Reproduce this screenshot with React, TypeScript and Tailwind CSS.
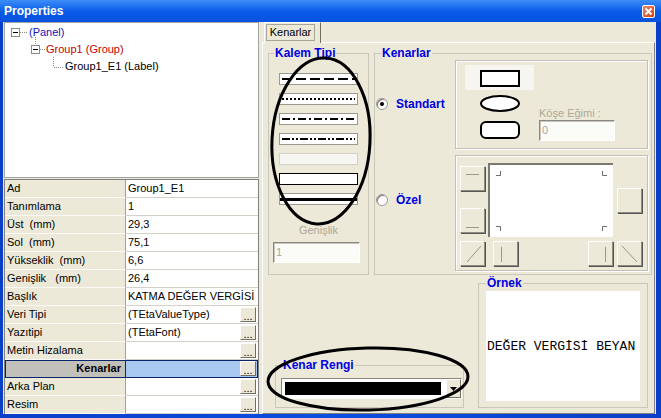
import React from "react";

const props: { label: string; value: string; btn?: boolean; sel?: boolean }[] = [
  { label: "Ad", value: "Group1_E1" },
  { label: "Tanımlama", value: "1" },
  { label: "Üst  (mm)", value: "29,3" },
  { label: "Sol  (mm)", value: "75,1" },
  { label: "Yükseklik  (mm)", value: "6,6" },
  { label: "Genişlik   (mm)", value: "26,4" },
  { label: "Başlık", value: "KATMA DEĞER VERGİSİ" },
  { label: "Veri Tipi", value: "(TEtaValueType)", btn: true },
  { label: "Yazıtipi", value: "(TEtaFont)", btn: true },
  { label: "Metin Hizalama", value: "", btn: true },
  { label: "Kenarlar", value: "", btn: true, sel: true },
  { label: "Arka Plan", value: "", btn: true },
  { label: "Resim", value: "", btn: true },
];

const Dots = () => (
  <div className="w-[16px] h-[15px] mr-[2px] shrink-0 bg-[#ece9d8] border border-t-white border-l-white border-r-[#716f64] border-b-[#716f64] flex items-end justify-center text-[11px] leading-[9px]">
    ...
  </div>
);

const PropertyGrid = () => (
  <div className="mt-[1px] w-[255px] border-t border-l border-r border-[#808080] bg-white">
    {props.map((p) => (
      <div
        key={p.label}
        className={`flex h-[18px] ${p.sel ? "outline outline-1 -outline-offset-1 outline-[#0a246a]" : ""}`}
      >
        <div
          className={`w-[121px] shrink-0 border-r border-b whitespace-pre leading-[17px] ${
            p.sel
              ? "bg-[#c2c0bb] border-r-[#0a246a] border-b-[#0a246a] font-bold text-right pr-[4px]"
              : "bg-[#ece9d8] border-r-[#a0a0a0] border-b-[#fbfaf6] pl-[2px]"
          }`}
        >
          {p.label}
        </div>
        <div
          className={`w-[132px] flex items-center border-b ${
            p.sel ? "bg-[#a8c8f2] border-b-[#0a246a]" : "bg-white border-b-[#d4d1c8]"
          }`}
        >
          <span className="flex-1 pl-[2px] whitespace-nowrap overflow-hidden leading-[17px]">{p.value}</span>
          {p.btn && <Dots />}
        </div>
      </div>
    ))}
  </div>
);

const Tree = () => (
  <div className="h-[156px] w-[255px] border border-[#a3a3a3] bg-white pt-[1px]">
    <div className="flex items-center h-[17px] pl-[6px]">
      <svg width="17" height="16" className="overflow-visible">
        <rect x="0.5" y="3.5" width="8" height="8" fill="white" stroke="#8c8c8c" />
        <line x1="2" y1="7.5" x2="7" y2="7.5" stroke="#000" />
        <line x1="9" y1="7.5" x2="17" y2="7.5" stroke="#8c8c8c" strokeDasharray="1 1" />
      </svg>
      <span className="ml-[1px] text-[#1414b4]">(Panel)</span>
    </div>
    <div className="flex items-center h-[17px] pl-[26px]">
      <svg width="14" height="16" className="overflow-visible">
        <line x1="4.5" y1="-5" x2="4.5" y2="3" stroke="#8c8c8c" strokeDasharray="1 1" />
        <rect x="0.5" y="3.5" width="8" height="8" fill="white" stroke="#8c8c8c" />
        <line x1="2" y1="7.5" x2="7" y2="7.5" stroke="#000" />
        <line x1="9" y1="7.5" x2="14" y2="7.5" stroke="#8c8c8c" strokeDasharray="1 1" />
      </svg>
      <span className="ml-[1px] text-[#c80000]">Group1 (Group)</span>
    </div>
    <div className="flex items-center h-[17px] pl-[44px]">
      <svg width="14" height="16" className="overflow-visible">
        <line x1="4.5" y1="-2" x2="4.5" y2="8" stroke="#8c8c8c" strokeDasharray="1 1" />
        <line x1="5" y1="8.5" x2="14" y2="8.5" stroke="#8c8c8c" strokeDasharray="1 1" />
      </svg>
      <span className="ml-[2px]">Group1_E1 (Label)</span>
    </div>
  </div>
);

const Legend = ({ children, ml }: { children: React.ReactNode; ml: string }) => (
  <legend className={`${ml} px-[1px] text-[12px] leading-[14px] font-bold text-[#0000e0]`}>{children}</legend>
);

const LineBox = ({ dash, faint }: { dash?: string; faint?: boolean }) => (
  <div
    className={`w-[79px] h-[12px] border ${
      faint ? "border-[#d2d0c8] bg-[#f6f6f3]" : "border-[#9c9a90] bg-white"
    }`}
  >
    {dash && (
      <svg width="77" height="10">
        <line x1="2" y1="5" x2="75" y2="5" stroke="#000" strokeWidth="2" strokeDasharray={dash} />
      </svg>
    )}
  </div>
);

const Btn3D = ({ children, className = "" }: { children?: React.ReactNode; className?: string }) => (
  <div
    className={`w-[25px] h-[25px] shrink-0 bg-[#ece9d8] border border-t-white border-l-white border-r-[#8d8a7e] border-b-[#8d8a7e] shadow-[1px_1px_0_#555] ${className}`}
  >
    <svg width="23" height="23">{children}</svg>
  </div>
);

const KalemTipi = () => (
  <fieldset className="w-[101px] h-[229px] border border-[#c9c7ba]">
    <Legend ml="ml-[5px]">
      Kalem <span className="underline">T</span>ipi
    </Legend>
    <div className="flex flex-col items-start pl-[10px] pt-[13px] gap-[8px]">
      <LineBox dash="10 4" />
      <LineBox dash="2 2" />
      <LineBox dash="8 3 2 3" />
      <LineBox dash="8 2 2 2 2 2" />
      <LineBox faint />
      <div className="w-[79px] h-[12px] border border-black bg-white" />
      <div className="w-[79px] h-[12px] border border-[#9c9a90] bg-white flex flex-col justify-center">
        <div className="h-[3px] bg-black" />
      </div>
    </div>
    <div className="mt-[18px] text-center text-[#aca899] leading-[14px]">Genişlik</div>
    <div className="mt-[5px] ml-[4px] w-[87px] h-[21px] bg-[#fbfbf8] border border-t-[#8a887e] border-l-[#8a887e] border-r-white border-b-white shadow-[inset_1px_1px_0_#c8c6bc] pl-[2px] leading-[19px] text-[#aca899]">
      1
    </div>
  </fieldset>
);

const Radio = ({ on }: { on?: boolean }) => (
  <span className="w-[12px] h-[12px] rounded-full bg-white border border-[#9c9a90] shadow-[inset_1px_1px_0_#808080] flex items-center justify-center">
    {on && <span className="w-[4px] h-[4px] rounded-full bg-black" />}
  </span>
);

const Frame = ({ children, className = "" }: { children: React.ReactNode; className?: string }) => (
  <div className={`w-[193px] border border-[#c2c0b3] shadow-[inset_1px_1px_0_#fff,1px_1px_0_#fff] ${className}`}>
    {children}
  </div>
);

const Kenarlar = () => (
  <fieldset className="ml-[5px] w-[278px] h-[229px] border border-[#c9c7ba]">
    <Legend ml="ml-[6px]">Kenarlar</Legend>
    <div className="flex">
      <div className="w-[80px] shrink-0 pl-[1px]">
        <div className="mt-[37px] flex items-center gap-[8px] h-[14px]">
          <Radio on />
          <span className="text-[12px] font-bold text-[#0000e0]">Standart</span>
        </div>
        <div className="mt-[82px] flex items-center gap-[8px] h-[14px]">
          <Radio />
          <span className="text-[12px] font-bold text-[#0000e0]">Özel</span>
        </div>
      </div>
      <div className="flex flex-col gap-[6px]">
        <Frame className="h-[89px] flex">
          <div className="ml-[9px] pt-[4px] w-[69px] flex flex-col items-center">
            <div className="w-[69px] h-[25px] bg-[#f6f5f0] flex items-center justify-center">
              <svg width="40" height="18">
                <rect x="1" y="2" width="38" height="15" fill="white" stroke="#000" strokeWidth="2" />
              </svg>
            </div>
            <svg width="40" height="17" className="mt-[5px]">
              <ellipse cx="20" cy="8.5" rx="19" ry="7.5" fill="white" stroke="#000" strokeWidth="2" />
            </svg>
            <svg width="40" height="18" className="mt-[9px]">
              <rect x="1" y="1" width="38" height="16" rx="5" fill="white" stroke="#000" strokeWidth="2" />
            </svg>
          </div>
          <div className="ml-[5px] pt-[45px] flex flex-col">
            <span className="leading-[14px] text-[#aca899] whitespace-pre">Köşe Eğimi :</span>
            <div className="w-[76px] h-[21px] bg-[#fbfbf8] border border-t-[#8a887e] border-l-[#8a887e] border-r-white border-b-white shadow-[inset_1px_1px_0_#c8c6bc] pl-[2px] leading-[19px] text-[#aca899]">
              0
            </div>
          </div>
        </Frame>
        <Frame className="h-[116px] pt-[7px]">
          <div className="flex">
            <div className="ml-[4px] flex flex-col">
              <Btn3D className="mt-[3px]">
                <line x1="5" y1="7.5" x2="18" y2="7.5" stroke="#9a978b" />
              </Btn3D>
              <Btn3D className="mt-[17px]">
                <line x1="5" y1="18.5" x2="18" y2="18.5" stroke="#9a978b" />
              </Btn3D>
            </div>
            <div className="ml-[3px] w-[125px] h-[74px] bg-white border-t-2 border-l-2 border-[#7c7a70]">
              <svg width="123" height="72">
                <path d="M6 10.5H10.5V6" fill="none" stroke="#6e6c64" />
                <path d="M117 10.5H112.5V6" fill="none" stroke="#6e6c64" />
                <path d="M6 61.5H10.5V66" fill="none" stroke="#6e6c64" />
                <path d="M117 61.5H112.5V66" fill="none" stroke="#6e6c64" />
              </svg>
            </div>
            <div className="ml-[4px]">
              <Btn3D className="mt-[25px]" />
            </div>
          </div>
          <div className="mt-[4px] flex">
            <Btn3D className="ml-[4px]">
              <line x1="6" y1="20" x2="20" y2="4" stroke="#9a978b" />
            </Btn3D>
            <Btn3D className="ml-[8px]">
              <line x1="7.5" y1="5" x2="7.5" y2="20" stroke="#9a978b" />
            </Btn3D>
            <Btn3D className="ml-[70px]">
              <line x1="16.5" y1="5" x2="16.5" y2="20" stroke="#9a978b" />
            </Btn3D>
            <Btn3D className="ml-[4px]">
              <line x1="4" y1="4" x2="19" y2="20" stroke="#9a978b" />
            </Btn3D>
          </div>
        </Frame>
      </div>
    </div>
  </fieldset>
);

const KenarRengi = () => (
  <fieldset className="w-[189px] h-[50px] border border-[#c9c7ba]">
    <Legend ml="ml-[6px]">Kenar Rengi</Legend>
    <div className="mt-[6px] ml-[5px] w-[181px] h-[21px] flex bg-white border border-t-[#8a887e] border-l-[#8a887e] border-r-white border-b-white">
      <div className="flex-1 m-[3px] mr-[5px] bg-black" />
      <div className="w-[15px] bg-[#ece9d8] border border-t-white border-l-white border-r-[#716f64] border-b-[#716f64] flex items-center justify-center">
        <svg width="7" height="4">
          <path d="M0 0H7L3.5 4Z" fill="#000" />
        </svg>
      </div>
    </div>
  </fieldset>
);

const Ornek = () => (
  <fieldset className="ml-[14px] w-[170px] h-[132px] border border-[#c9c7ba]">
    <Legend ml="ml-[7px]">Örnek</Legend>
    <div className="mt-[1px] ml-[7px] w-[154px] h-[110px] bg-white flex items-center pl-[1px] pt-[1px]">
      <span className="font-['Liberation_Mono',monospace] text-[13px] whitespace-nowrap">DEĞER VERGİSİ BEYAN</span>
    </div>
  </fieldset>
);

export default function App() {
  return (
    <div className="relative w-[661px] h-[418px] flex flex-col bg-gradient-to-r from-[#0a3fc8] via-[#0b4ee0] to-[#0a3fc8] font-['Liberation_Sans',Arial,sans-serif] text-[11px] text-black overflow-hidden">
      <div className="h-[22px] shrink-0 flex items-center justify-between bg-gradient-to-b from-[#3d8ef8] via-[#0a5ce9] to-[#0652de] pl-[4px] pr-[6px]">
        <span className="text-white font-bold text-[12px] leading-none">Properties</span>
        <div className="w-[13px] h-[13px] rounded-[2px] border border-white bg-gradient-to-br from-[#f08a64] to-[#cf3a12] flex items-center justify-center">
          <svg width="9" height="9">
            <path d="M1.5 1.5L7.5 7.5M7.5 1.5L1.5 7.5" stroke="white" strokeWidth="2" />
          </svg>
        </div>
      </div>
      <div className="flex-1 flex ml-[3px] mr-[5px] mb-[4px] bg-[#ece9d8]">
        <div className="w-[256px] shrink-0 pl-[1px] flex flex-col">
          <Tree />
          <PropertyGrid />
        </div>
        <div className="ml-[2px] flex-1 flex flex-col">
          <div className="h-[20px] flex">
            <div className="relative z-[1] ml-[3px] w-[57px] h-[21px] bg-[#ece9d8] border-t border-l border-white border-r border-r-[#716f64] pt-[1px] pl-[1px]">
              <div className="w-[49px] h-[17px] border border-[#a7a597] flex items-center justify-center">Kenarlar</div>
            </div>
          </div>
          <div className="ml-[1px] w-[393px] flex-1 border border-t-white border-l-white border-r-[#808080] border-b-[#808080]">
            <div className="flex mt-[3px] pl-[5px]">
              <KalemTipi />
              <Kenarlar />
            </div>
            <div className="flex items-end mt-[1px] pl-[12px]">
              <KenarRengi />
              <Ornek />
            </div>
          </div>
        </div>
      </div>
      <svg className="absolute inset-0 pointer-events-none" width="661" height="418">
        <ellipse cx="321" cy="141" rx="49" ry="83" fill="none" stroke="#000" strokeWidth="3" transform="rotate(3 321 141)" />
        <ellipse cx="368" cy="379" rx="100" ry="31" fill="none" stroke="#000" strokeWidth="3" transform="rotate(-1.5 368 379)" />
      </svg>
    </div>
  );
}
